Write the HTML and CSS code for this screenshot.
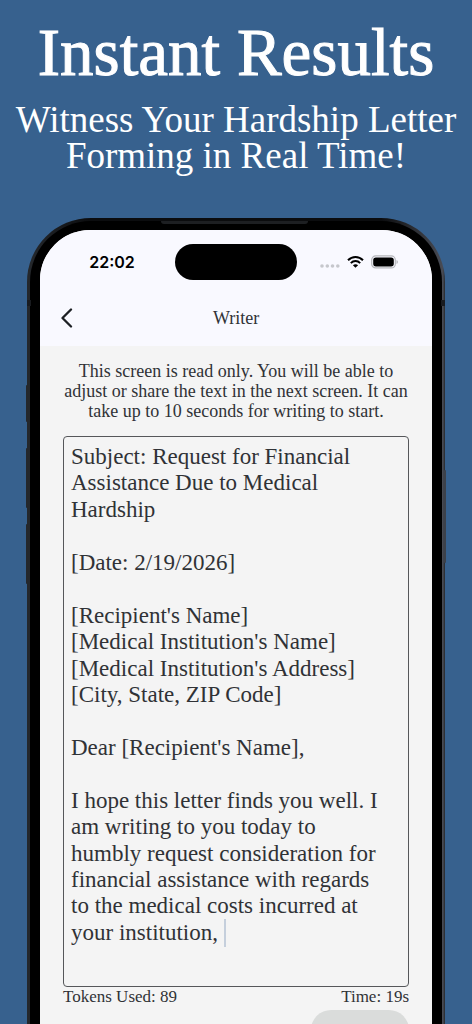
FILE: index.html
```html
<!DOCTYPE html>
<html lang="en">
<head>
<meta charset="utf-8">
<meta name="viewport" content="width=device-width, initial-scale=1">
<title>Instant Results</title>
<link rel="stylesheet" href="styles.css">
</head>
<body>
<header class="promo">
  <h1 class="promo-title">Instant Results</h1>
  <p class="promo-text">Witness Your Hardship Letter<br>Forming in Real Time!</p>
</header>
<main class="phone">
  <span class="antenna"></span>
  <span class="side-key key-action"></span>
  <span class="side-key key-up"></span>
  <span class="side-key key-down"></span>
  <span class="side-key key-power"></span>
  <span class="band band-left"></span>
  <span class="band band-right"></span>
  <div class="bezel">
    <div class="screen">
      <div class="top">
        <div class="status">
          <time class="clock">22:02</time>
          <span class="island"></span>
          <span class="indicators">
            <svg width="20" height="14" viewBox="0 0 20 14" fill="#c6c7cc"><circle cx="2" cy="11" r="1.8"/><circle cx="7.3" cy="11" r="1.8"/><circle cx="12.5" cy="11" r="1.8"/><circle cx="17.8" cy="11" r="1.8"/></svg>
            <svg width="17" height="14" viewBox="0 0 17 14" fill="none" stroke="#000" stroke-width="2"><path d="M1 5.2C5.2.9 11.8.9 16 5.2M3.8 8.1C6.5 5.4 10.5 5.4 13.2 8.1"/><path d="M8.5 12.8 5.9 10.2C7.4 8.8 9.6 8.8 11.1 10.2Z" fill="#000" stroke="none"/></svg>
            <svg width="28" height="14" viewBox="0 0 28 14"><rect x=".7" y=".9" width="23.6" height="12" rx="4" fill="none" stroke="#b5b6bb" stroke-width="1.2"/><rect x="2.2" y="2.4" width="20.6" height="9" rx="2.7"/><path d="M25.5 5v4c1.9-.7 1.9-3.3 0-4Z" fill="#b5b6bb"/></svg>
          </span>
        </div>
        <nav class="bar">
          <button class="back" type="button" aria-label="Back"><svg width="14" height="20" viewBox="0 0 14 20" fill="none" stroke="#1d2024" stroke-width="2.3" stroke-linecap="round" stroke-linejoin="round"><path d="M10 1.5 1.5 10l8.5 8.5"/></svg></button>
          <h2 class="bar-title">Writer</h2>
        </nav>
      </div>
      <section class="content">
        <p class="notice">This screen is read only. You will be able to<br>adjust or share the text in the next screen. It can<br>take up to 10 seconds for writing to start.</p>
        <div class="editor">
          <textarea class="letter" aria-label="Letter" readonly>Subject: Request for Financial
Assistance Due to Medical
Hardship

[Date: 2/19/2026]

[Recipient's Name]
[Medical Institution's Name]
[Medical Institution's Address]
[City, State, ZIP Code]

Dear [Recipient's Name],

I hope this letter finds you well. I
am writing to you today to
humbly request consideration for
financial assistance with regards
to the medical costs incurred at
your institution,</textarea>
          <span class="caret"></span>
        </div>
        <div class="stats"><span>Tokens Used: 89</span><span>Time: 19s</span></div>
        <button class="next" type="button" aria-label="Next" disabled></button>
      </section>
    </div>
  </div>
</main>
</body>
</html>
```
FILE: styles.css
```css
* {
  box-sizing: border-box;
}

body {
  display: flex;
  flex-direction: column;
  height: 100vh;
  margin: 0;
  overflow: hidden;
  background: #37618e;
  color: #303236;
  font-family: "Liberation Serif", "Times New Roman", serif;
}

h1, h2, p {
  margin: 0;
  font-weight: 400;
}

.promo {
  flex: none;
  height: 218px;
  padding-top: 16px;
  color: #fff;
  text-align: center;
  white-space: nowrap;
}

.promo-title {
  font-size: 67px;
  line-height: 72px;
  -webkit-text-stroke: 1px #fff;
}

.promo-text {
  margin-top: 14px;
  font-size: 37px;
  line-height: 36px;
}

.phone {
  position: relative;
  flex: 1;
  min-height: 0;
  margin: 0 27px;
  padding: 3px 3px 0;
  border-radius: 64px 64px 0 0;
  background: linear-gradient(90deg, #24272b 0, #24272b 4px, #0b0c0e 64px, #0b0c0e calc(100% - 64px), #484b54 calc(100% - 2px), #24272b);
}

.antenna {
  position: absolute;
  top: 3px;
  left: 134px;
  right: 137px;
  z-index: 1;
  height: 3px;
  border-radius: 0 0 3px 3px;
  background: #1d1f22;
}

.side-key {
  position: absolute;
  left: -1px;
  width: 2px;
  border-radius: 2px;
  background: #24272b;
}

.key-action { top: 167px; height: 37px; }
.key-up { top: 230px; height: 60px; }
.key-down { top: 306px; height: 60px; }
.key-power { top: 252px; right: -1px; left: auto; height: 93px; background: #3c414a; }

.band {
  position: absolute;
  top: 82px;
  width: 4px;
  height: 6px;
  background: #191b1f;
}

.band-left { left: 0; }
.band-right { right: 0; }

.bezel {
  height: 100%;
  padding: 9px 10px 0;
  border-radius: 61px 61px 0 0;
  background: #000;
}

.screen {
  height: 100%;
  overflow: hidden;
  border-radius: 50px 50px 0 0;
  background: #f4f4f4;
}

.top {
  height: 116px;
  background: #f9f9ff;
}

.status {
  display: grid;
  grid-template-columns: 1fr 122px 1fr;
  align-items: center;
  height: 64px;
}

.clock {
  padding-left: 9px;
  color: #000;
  font: 600 16px/20px Inter, sans-serif;
  text-align: center;
}

.island {
  height: 36px;
  border-radius: 18px;
  background: #000;
}

.indicators {
  display: flex;
  gap: 7px;
  justify-content: flex-end;
  padding-right: 33px;
}

.bar {
  display: grid;
  grid-template-columns: 24px 1fr 24px;
  align-items: center;
  height: 48px;
  padding: 0 21px;
}

.back {
  display: flex;
  padding: 0;
  border: 0;
  background: none;
}

.bar-title {
  font-size: 18px;
  line-height: 20px;
  text-align: center;
}

.content {
  display: flex;
  flex-direction: column;
  padding: 15px 23px 0;
}

.notice {
  font-size: 18px;
  line-height: 20px;
  text-align: center;
  white-space: nowrap;
}

.editor {
  position: relative;
  display: flex;
  margin-top: 15px;
}

.letter {
  flex: 1;
  min-width: 0;
  height: 551px;
  padding: 7px;
  overflow: hidden;
  border: 1px solid #55575a;
  border-radius: 4px;
  outline: 0;
  background: transparent;
  color: #303236;
  font-family: inherit;
  font-size: 23px;
  line-height: 1.15;
  resize: none;
}

.caret {
  position: absolute;
  top: 483px;
  left: 161px;
  width: 2px;
  height: 28px;
  background: #c5cfdc;
}

.stats {
  display: flex;
  justify-content: space-between;
  font-size: 17px;
  line-height: 20px;
}

.next {
  align-self: flex-end;
  width: 98px;
  height: 40px;
  margin-top: 3px;
  border: 0;
  border-radius: 20px;
  background: #dadcdb;
}
```
